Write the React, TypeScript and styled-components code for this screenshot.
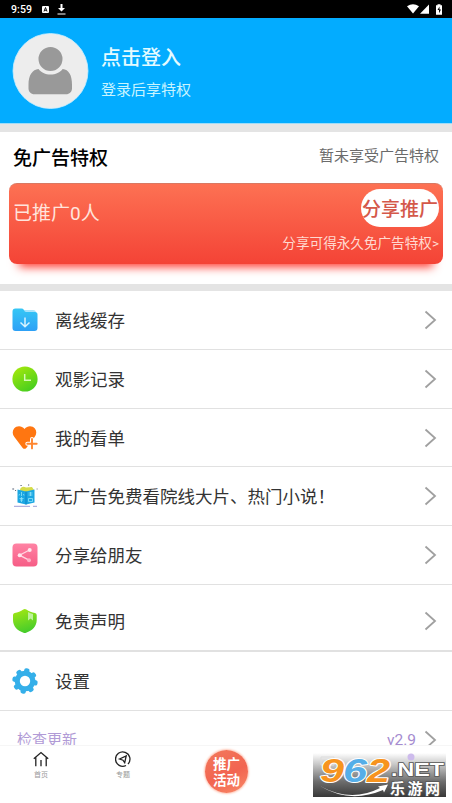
import React from 'react';
import styled, { createGlobalStyle } from 'styled-components';

const GlobalStyle = createGlobalStyle`
  * { box-sizing: border-box; }
  body {
    margin: 0;
    background: #fff;
    font-family: Roboto, "Noto Sans CJK SC", sans-serif;
    overflow: hidden;
  }
`;

const Screen = styled.div`
  width: 452px;
  height: 803px;
  display: flex;
  flex-direction: column;
  overflow: hidden;
  background: #fff;
`;

const StatusBar = styled.div`
  height: 18px;
  flex: none;
  background: #000;
  color: #fff;
  display: flex;
  align-items: center;
  padding: 0 10px 0 11px;
  font-size: 10.5px;
  font-weight: 500;
  letter-spacing: 0.1px;
  svg { display: block; }
`;

const StatusIcons = styled.div<{ $end?: boolean }>`
  display: flex;
  align-items: center;
  gap: ${(p) => (p.$end ? '0' : '8px')};
  margin-left: ${(p) => (p.$end ? 'auto' : '10px')};
`;

const Header = styled.header`
  height: 106px;
  flex: none;
  display: flex;
  align-items: center;
  gap: 12px;
  padding: 0 12px;
  background: #03acff;
  border-bottom: 1px solid #9fdcf8;
`;

const Greeting = styled.div`
  display: flex;
  flex-direction: column;
  gap: 6px;
  padding-top: 4px;
  color: #e4fbff;
`;

const LoginTitle = styled.div`
  font-size: 20px;
  line-height: 28px;
  font-weight: 500;
`;

const LoginHint = styled.div`
  font-size: 15px;
  line-height: 24px;
  color: #c9f4ff;
`;

const Divider = styled.div<{ $h: number }>`
  height: ${(p) => p.$h}px;
  flex: none;
  background: #e4e4e4;
`;

const Promo = styled.section`
  height: 152px;
  flex: none;
  padding: 0 9px;
`;

const PromoHead = styled.div`
  height: 51px;
  display: flex;
  justify-content: space-between;
  align-items: center;
  padding: 0 4px;
`;

const PromoTitle = styled.h2`
  margin: 0;
  padding-top: 3px;
  font-size: 19px;
  line-height: 28px;
  font-weight: 500;
  color: #000;
`;

const PromoStatus = styled.span`
  font-size: 15px;
  line-height: 22px;
  padding-bottom: 3px;
  color: #6b6b6b;
`;

const Card = styled.div`
  height: 81px;
  width: 434px;
  border-radius: 8px;
  background: linear-gradient(#fd7153, #f44336);
  border-top: 1px solid #d97862;
  box-shadow: 0 13px 9px -10px #ff3a30;
  padding: 5px 4px 0 4px;
  display: flex;
  justify-content: space-between;
`;

const Invited = styled.div`
  font-size: 19px;
  line-height: 28px;
  padding-top: 11px;
  color: #ffe4dd;
`;

const ShareSide = styled.div`
  display: flex;
  flex-direction: column;
  align-items: flex-end;
`;

const ShareButton = styled.button`
  width: 78px;
  height: 38px;
  border: 0;
  padding: 3px 0 0;
  border-radius: 19px;
  background: #fff;
  color: #d4584a;
  font: 500 19px/35px Roboto, "Noto Sans CJK SC", sans-serif;
  white-space: nowrap;
`;

const ShareHint = styled.div`
  font-size: 13.6px;
  line-height: 20px;
  margin-top: 6px;
  color: #ffd9d0;
  white-space: nowrap;
`;

const Menu = styled.main`
  flex: 1;
  min-height: 0;
  overflow: hidden;
`;

const Row = styled.div<{ $h: number; $top?: number; $line?: number }>`
  height: ${(p) => p.$h}px;
  padding: ${(p) => p.$top ?? 0}px 15px 0 12px;
  border-bottom: ${(p) => p.$line ?? 1}px solid #e1e1e1;
  display: flex;
  align-items: center;
  svg { display: block; flex: none; }
`;

const RowLabel = styled.span`
  margin-left: 17px;
  flex: 1;
  padding-top: 2px;
  font-size: 17.5px;
  line-height: 26px;
  color: #333;
  white-space: nowrap;
`;

const UpdateLabel = styled.span`
  margin-left: 5px;
  flex: 1;
  padding-bottom: 1px;
  font-size: 15px;
  line-height: 22px;
  color: #b19bd6;
`;

const Version = styled.span`
  font-size: 15.5px;
  color: #a58bd0;
  margin-right: 8px;
`;

const NavBar = styled.nav`
  height: 58px;
  flex: none;
  display: grid;
  grid-template-columns: 82px 82px 125px 1fr;
  border-top: 1px solid #f6f6f6;
`;

const NavItem = styled.div`
  display: flex;
  flex-direction: column;
  align-items: center;
  padding-top: 5px;
  font-size: 7px;
  line-height: 10px;
  color: #999;
  svg { display: block; margin-bottom: 3px; }
`;

const ActivityBadge = styled.div`
  width: 43px;
  height: 43px;
  margin: 4px 0 0 41px;
  border-radius: 50%;
  background: linear-gradient(155deg, #f27459 15%, #f26450 55%, #f98a68);
  box-shadow: 0 0 2px 1px #ffc6b4;
  color: #fff;
  font-size: 13.5px;
  font-weight: 700;
  line-height: 16px;
  text-align: center;
  padding-top: 6px;
`;

const SiteMark = styled.div`
  width: 133px;
  height: 44px;
  margin: 7px 0 0 24px;
  background: linear-gradient(#fff 0%, #c9c9c9 25%, #6d6d6d 65%, #383838 100%);
  svg { display: block; }
`;

const Chevron = () => (
  <svg width="13" height="20" viewBox="0 0 13 20" fill="none" stroke="#a0a0a0" strokeWidth="1.8">
    <path d="M1.5 1.5 11 10 1.5 18.5" />
  </svg>
);

const Avatar = () => (
  <svg width="77" height="76" viewBox="0 0 77 76">
    <g transform="translate(.5 .3)">
      <circle cx="38" cy="37.700" r="37.500" fill="#ededed" stroke="#c8efff" strokeWidth=".8" />
      <path d="M26 35.800c2.500 3.500 7 5.500 12 5.500s9.700-2 12.200-5.500c6 .5 9.300 6 9.300 15.700v3.500c0 3.600-2.400 6-6 6H22c-3.600 0-6-2.400-6-6v-3.500c0-9.700 4-15.200 10-15.700Z" fill="#999" />
      <circle cx="38" cy="25.800" r="13" fill="#999" stroke="#ededed" strokeWidth="2" />
    </g>
  </svg>
);

const FolderIcon = () => (
  <svg width="26" height="26" viewBox="0 0 26 26">
    <defs>
      <linearGradient id="folder" x2="0" y2="1">
        <stop stopColor="#35c7f5" /><stop offset="1" stopColor="#2da0f6" />
      </linearGradient>
    </defs>
    <path d="M10 3h11q3 0 3 3v6H10Z" fill="#a8e3fb" />
    <path d="M3.500 1.500h6q1.500 0 2.300 1.300l.8 1.400q.5.800 1.600.800H23q2.500 0 2.500 2.500V21q0 3-3 3h-19q-3 0-3-3V4.500q0-3 3-3Z" fill="url(#folder)" />
    <path d="M13 10.500v9m-4.500-4L13 19.700l4.500-4.200" fill="none" stroke="#d8f4ff" strokeWidth="1.500" />
  </svg>
);

const ClockIcon = () => (
  <svg width="26" height="26" viewBox="0 0 26 26">
    <defs>
      <linearGradient id="clock" x1=".2" x2=".8" y2="1">
        <stop stopColor="#a4e80c" /><stop offset="1" stopColor="#40cc20" />
      </linearGradient>
    </defs>
    <circle cx="13" cy="13" r="12.600" fill="url(#clock)" />
    <path d="M12.700 8v6.300H19" fill="none" stroke="#d6f9b4" strokeWidth="1.500" />
  </svg>
);

const HeartIcon = () => (
  <svg width="26" height="26" viewBox="0 0 26 26">
    <path d="M12.500 4C9.800.4 4.700.3 2.100 3.500.1 6 .3 9.500 2.400 12l8.300 10.900q1.800 1.800 3.600 0L22.600 12c2.100-2.500 2.300-6 .3-8.500C20.200.3 15.300.4 12.500 4Z" fill="#ff7611" />
    <path d="M20 14v9.400m-4.700-4.700h9.400" stroke="#fff" strokeWidth="4" strokeLinecap="round" />
    <path d="M20 14v9.400m-4.700-4.700h9.400" stroke="#ff8630" strokeWidth="1.900" strokeLinecap="round" />
  </svg>
);

const NovelIcon = () => (
  <svg width="26" height="26" viewBox="0 0 26 26">
    <path d="M8 6.500c1-3 3.500-3.500 6-2l6-.5 2 3-1 3H9Z" fill="#d6dc49" />
    <path d="M5.500 6.500 14 8.500l8.500-2v13L14 21.500l-8.500-2Z" fill="#1ba7e2" />
    <path d="M14 8.500v13" stroke="#0a83c8" />
    <path d="M9.500 9v4m-2-2-.5 1.500m4.500-1.500.5 1.500M7.500 15.500h4m-2-1.500v5m-1.500-2h3M16.500 10h4m-2-1v4m-2-1h4m-4 3.500h4v3h-4Z" fill="none" stroke="#8fe3fb" strokeWidth=".8" />
    <path d="M2 23.300h16m3 0h4" stroke="#9293d2" strokeWidth=".9" />
    <path d="M.3 6h1.800m1 1.500h1M8.500 2.500h1.200M16 2h1.200m7.500 4h.800" stroke="#555f72" />
  </svg>
);

const ShareIcon = () => (
  <svg width="26" height="26" viewBox="0 0 26 26">
    <defs>
      <linearGradient id="share" x2="0" y2="1">
        <stop stopColor="#ff83a4" /><stop offset="1" stopColor="#f65d86" />
      </linearGradient>
    </defs>
    <rect x=".5" y="1.500" width="25" height="23" rx="4" fill="url(#share)" />
    <path d="m17.500 8-10 5.200 9.500 5" fill="none" stroke="#ffd6e2" strokeWidth="1.300" />
    <circle cx="17.700" cy="8" r="2" fill="#ffe7ee" />
    <circle cx="7.700" cy="13.200" r="2" fill="#ffe7ee" />
    <circle cx="17" cy="18.200" r="2" fill="#ffb0c6" />
  </svg>
);

const ShieldIcon = () => (
  <svg width="26" height="26" viewBox="0 0 26 26">
    <defs>
      <linearGradient id="shield" x1=".3" x2=".6" y2="1">
        <stop stopColor="#a0e614" /><stop offset="1" stopColor="#41cb2c" />
      </linearGradient>
    </defs>
    <path d="M11.300 1.500q1.500-1.100 3 0c2.600 1.700 5.500 2.900 8.700 3.600q1.700.4 1.700 2V12c0 6.300-4.400 10.600-10.600 12.800q-1.300.5-2.600 0C5.300 22.600 1 18.300 1 12V7.100q0-1.600 1.600-2c3.200-.7 6.100-1.900 8.700-3.600Z" fill="url(#shield)" />
    <path d="M16 4v8.500l2.500-2 2.500 2V6q-2.500-.5-5-2Z" fill="#bdf19b" />
  </svg>
);

const TEETH = [0, 45, 90, 135, 180, 225, 270, 315];

const GearIcon = () => (
  <svg width="26" height="26" viewBox="0 0 26 26">
    <g fill="#35afe9" transform="rotate(10 13 13)">
      <circle cx="13" cy="13" r="10.300" />
      {TEETH.map((a) => (
        <rect key={a} x="10.300" y=".3" width="5.400" height="6" rx="2" transform={`rotate(${a} 13 13)`} />
      ))}
    </g>
    <circle cx="13" cy="13" r="5.200" fill="#fff" />
  </svg>
);

const HomeIcon = () => (
  <svg width="16" height="16" viewBox="0 0 16 16" fill="none" stroke="#222" strokeWidth="1.300">
    <path d="M.8 7.800 8 1.500l7.200 6.300M2.800 6.500v8.700m10.400-8.700v8.700M8 9v6.200" />
  </svg>
);

const CompassIcon = () => (
  <svg width="16" height="16" viewBox="0 0 16 16" fill="none" stroke="#222" strokeWidth="1.300">
    <path d="M11 14.500A7.200 7.200 0 1 1 13 13M4.500 8l6.700-3.200-1.500 6.900L8 9.200Z" />
  </svg>
);

const items = [
  { label: '离线缓存', icon: <FolderIcon />, h: 59 },
  { label: '观影记录', icon: <ClockIcon />, h: 59 },
  { label: '我的看单', icon: <HeartIcon />, h: 58 },
  { label: '无广告免费看院线大片、热门小说！', icon: <NovelIcon />, h: 59 },
  { label: '分享给朋友', icon: <ShareIcon />, h: 59 },
  { label: '免责声明', icon: <ShieldIcon />, h: 67, top: 7, line: 2 },
  { label: '设置', icon: <GearIcon />, h: 59, plain: true },
];

export default function App() {
  return (
    <>
      <GlobalStyle />
      <Screen>
        <StatusBar>
          <span>9:59</span>
          <StatusIcons>
            <svg width="7" height="7" viewBox="0 0 7 7">
              <rect width="7" height="7" rx="1" fill="#fff" />
              <path d="m2 5.500 1.500-4 1.500 4M2.500 4.300h2" stroke="#000" strokeWidth=".9" fill="none" />
            </svg>
            <svg width="9" height="11" viewBox="0 0 9 11" fill="#fff">
              <path d="M3.500 0h2v4H8L4.500 7.500 1 4h2.500ZM.5 9.500h8v1h-8Z" />
            </svg>
          </StatusIcons>
          <StatusIcons $end>
            <svg width="12" height="10" viewBox="0 0 12 10" fill="#fff">
              <path d="M0 2.200Q6-1.800 12 2.200L6 9.500Z" />
            </svg>
            <svg width="11" height="10" viewBox="0 0 11 10" fill="#fff">
              <path d="M1 9.700 10 .5v9.200Z" />
            </svg>
            <svg width="12" height="11" viewBox="0 0 12 11">
              <path d="M6 1.200h1.500V.2h3v1H12v9.500H6Z" fill="#fff" />
              <path d="M9.500 2.500 7.500 6H9v3.300l2-3.800H9.500Z" fill="#000" />
            </svg>
          </StatusIcons>
        </StatusBar>
        <Header>
          <Avatar />
          <Greeting>
            <LoginTitle>点击登入</LoginTitle>
            <LoginHint>登录后享特权</LoginHint>
          </Greeting>
        </Header>
        <Divider $h={8} />
        <Promo>
          <PromoHead>
            <PromoTitle>免广告特权</PromoTitle>
            <PromoStatus>暂未享受广告特权</PromoStatus>
          </PromoHead>
          <Card>
            <Invited>已推广0人</Invited>
            <ShareSide>
              <ShareButton>分享推广</ShareButton>
              <ShareHint>分享可得永久免广告特权&gt;</ShareHint>
            </ShareSide>
          </Card>
        </Promo>
        <Divider $h={7} />
        <Menu>
          {items.map((it) => (
            <Row key={it.label} $h={it.h} $top={it.top} $line={it.line}>
              {it.icon}
              <RowLabel>{it.label}</RowLabel>
              {!it.plain && <Chevron />}
            </Row>
          ))}
          <Row $h={59}>
            <UpdateLabel>检查更新</UpdateLabel>
            <Version>v2.9</Version>
            <Chevron />
          </Row>
        </Menu>
        <NavBar>
          <NavItem><HomeIcon />首页</NavItem>
          <NavItem><CompassIcon />专题</NavItem>
          <ActivityBadge>推广<br />活动</ActivityBadge>
          <SiteMark>
            <svg width="133" height="44" viewBox="0 0 133 44">
              <circle cx="98" cy="4" r="3.500" fill="#cdbbec" />
              <path d="M8 4h13v8H8Z" fill="none" stroke="#ddd" />
              <g fontFamily="Liberation Sans, sans-serif" fontWeight="700" fontStyle="italic" fontSize="34" stroke="#fff" strokeWidth="2" paintOrder="stroke" strokeLinejoin="round">
                <text transform="translate(7 29) scale(1.270 1)" fill="#f7941e">9</text>
                <text transform="translate(30 29) scale(1.270 1)" fill="#55aee8">6</text>
                <text transform="translate(54 29) scale(1.220 1)" fill="#f7941e">2</text>
              </g>
              <path d="M7 33q31 17 60 2l-2-1.500 10-2-4 8-1-2.500Q37 51 7 33Z" fill="#fff" />
              <g fill="#fff" stroke="#555" strokeWidth="1.500" paintOrder="stroke" fontWeight="700">
                <text x="78" y="22.500" fontFamily="Liberation Sans, sans-serif" fontSize="18" textLength="53" lengthAdjust="spacingAndGlyphs">.NET</text>
                <text x="77" y="40.500" fontFamily="Noto Sans CJK SC, sans-serif" fontSize="15" textLength="50">乐游网</text>
              </g>
            </svg>
          </SiteMark>
        </NavBar>
      </Screen>
    </>
  );
}
